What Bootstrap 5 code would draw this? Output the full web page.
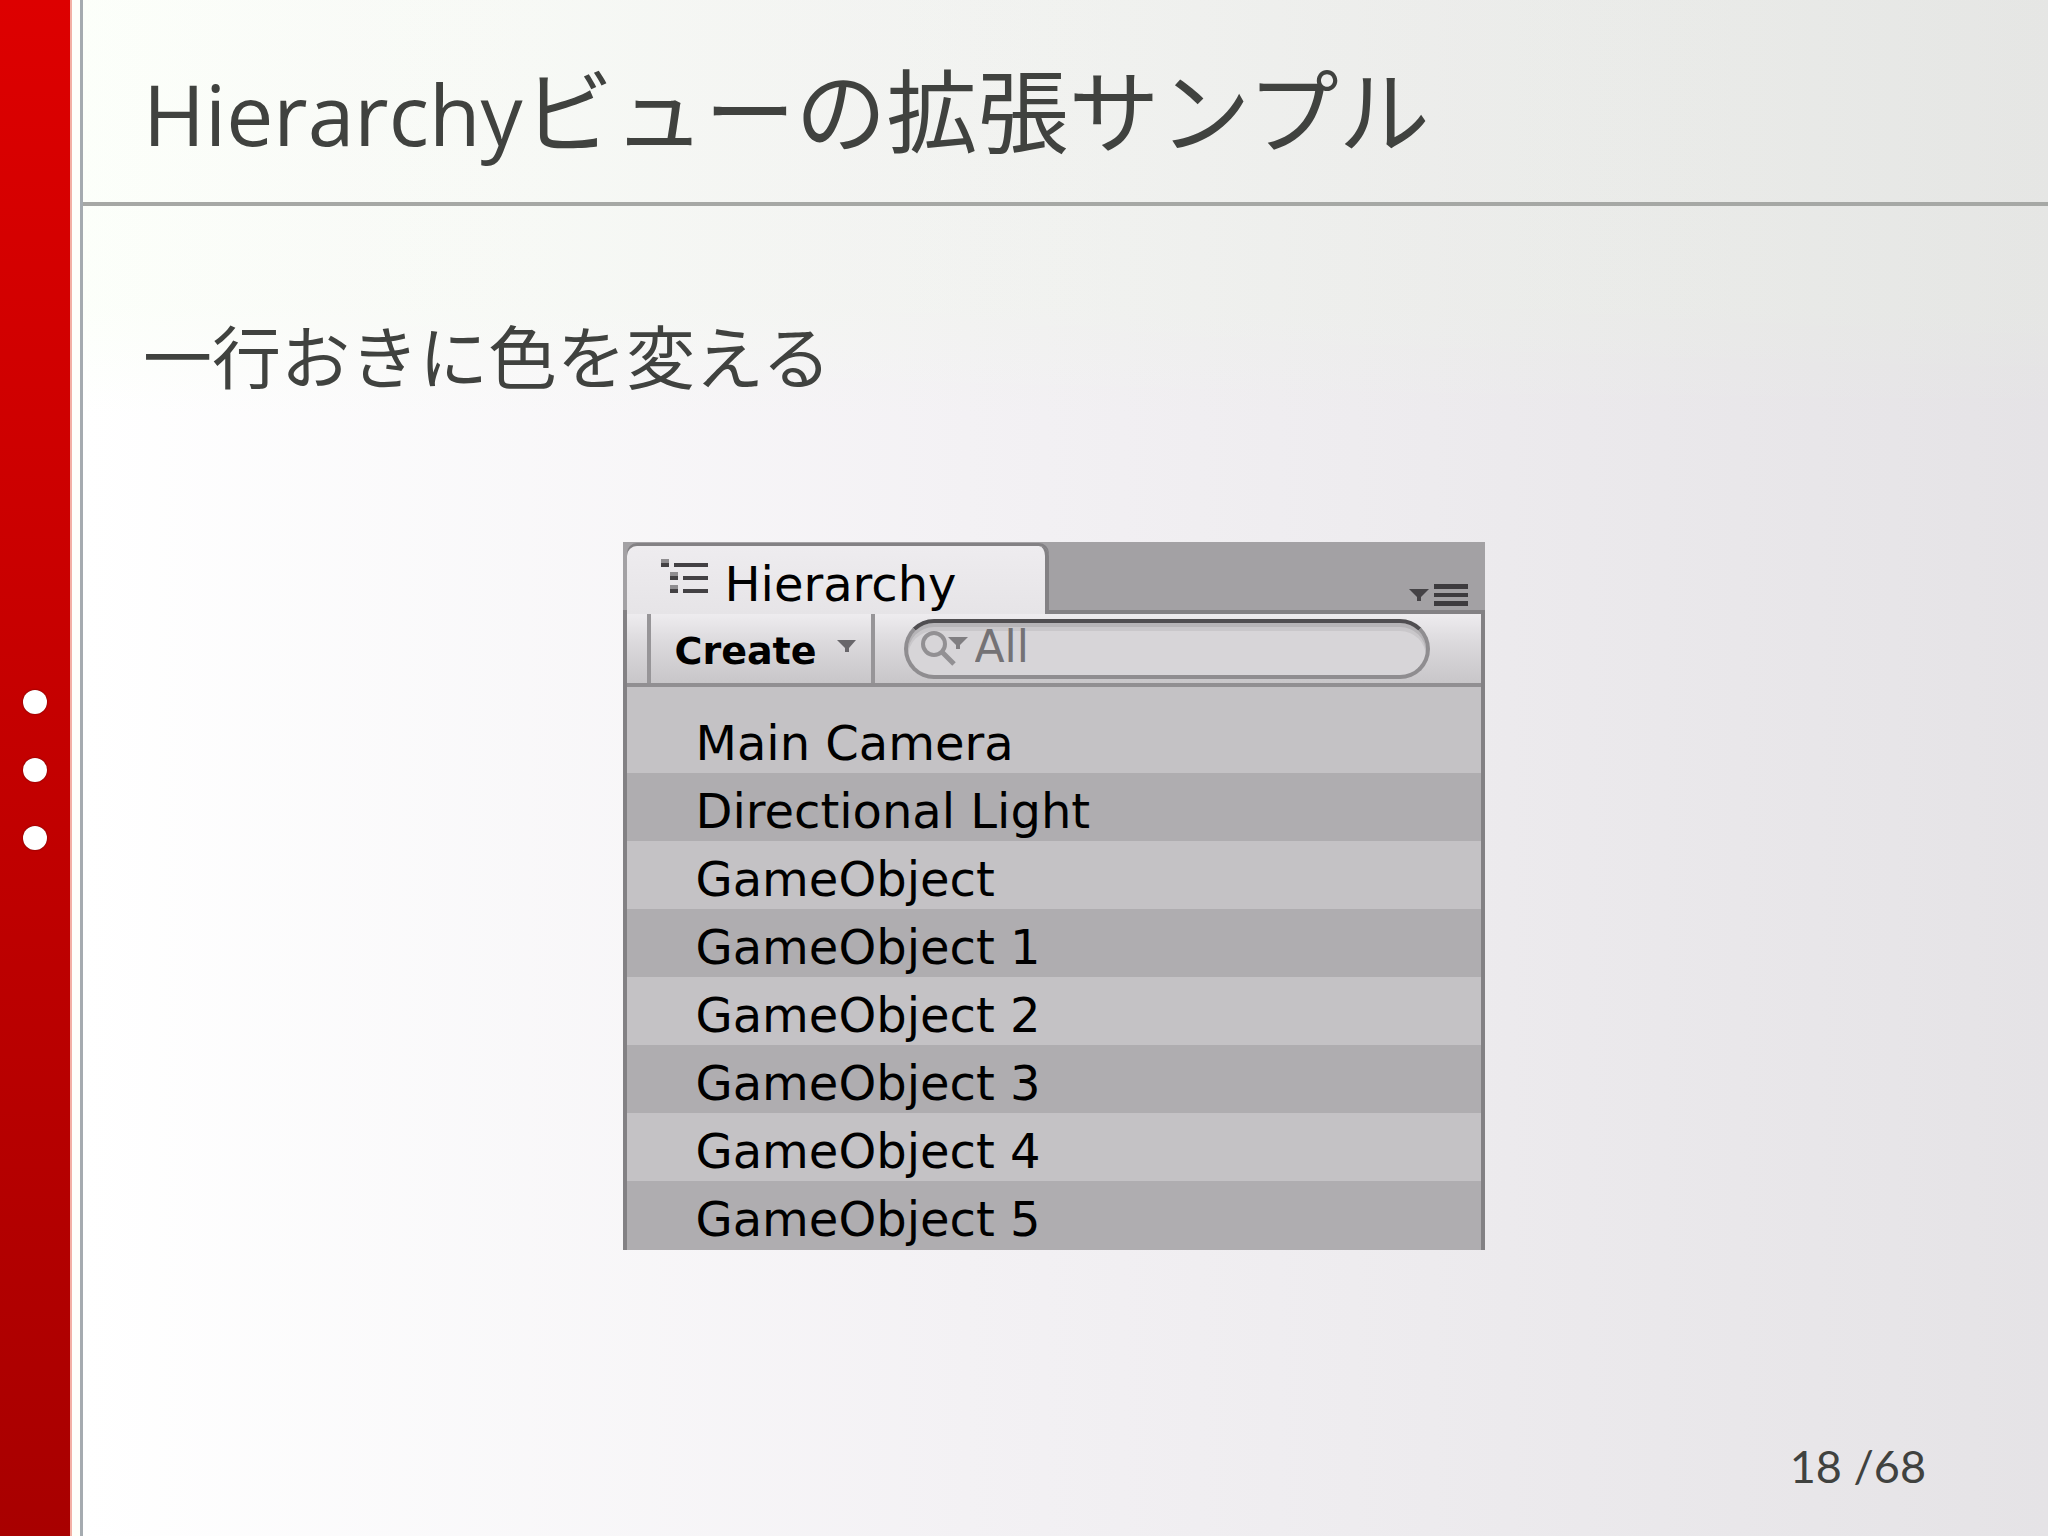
<!DOCTYPE html>
<html lang="ja">
<head>
<meta charset="utf-8">
<meta name="viewport" content="width=device-width, initial-scale=1">
<title>Hierarchyビューの拡張サンプル</title>
<link href="https://cdn.jsdelivr.net/npm/bootstrap@5.3.0/dist/css/bootstrap.min.css" rel="stylesheet">
<style>
  body { color: #40423f; font-family: "Noto Sans CJK JP", sans-serif; }
  .deck-rail { width: 70px; gap: 44px; padding-top: 4px; background: linear-gradient(#dd0000, #c30000 50%, #a80000); }
  .deck-rail span { width: 24px; height: 24px; background: #fff; box-shadow: 0 0 2px #600; }
  .deck-edge { width: 13px; background: #fefffa; border-left: 2px solid #f3b0a4; border-right: 3px solid #a5abb0; }
  .deck-slide { background: linear-gradient(rgba(232,255,215,.12) 20%, rgba(232,255,215,0) 27%), linear-gradient(to right, #fff, #f3f1f4 45%, #e5e3e6); }
  .deck-head { height: 206px; padding: 4px 84px 0 60px; border-bottom: 4px solid #a6a8a5; }
  .deck-head h1 { font-size: 91px; line-height: 204px; }
  .deck-latin { font-family: "Open Sans", sans-serif; font-size: 84px; line-height: 1; }
  .deck-body { padding: 94px 84px 0 60px; }
  .deck-body h2 { font-size: 69px; line-height: 108px; margin-bottom: 134px; }
  .deck-foot { padding: 0 122px 40px 0; font: 45px/60px Lato, sans-serif; }

  .tree-panel { width: 862px; max-width: 100%; color: #000; font-family: "DejaVu Sans", sans-serif; background: #c4c2c5; border: solid #838184; border-width: 0 4px; }
  .tree-tabs { height: 72px; background: #a3a1a4; border-bottom: 4px solid #838184; margin: 0 -4px; padding: 4px 14px 0 4px; }
  .tree-tab { width: 422px; height: 68px; margin-bottom: -4px; padding: 13px 0 0 34px; gap: 16px; font-size: 48px; line-height: 50px; border: 0; border-right: 4px solid #838184; border-radius: 10px 10px 0 0; background: linear-gradient(#eeecef, #e6e4e7); box-shadow: 0 -3px 0 #838184; }
  .tree-menu { padding: 0 3px 4px 0; }
  .tree-bar { height: 73px; background: linear-gradient(#eeecef, #dad8db 45%, #c8c6c9); border-bottom: 4px solid #918f92; }
  .tree-create { width: 228px; margin-left: 20px; padding: 4px 14px 0 24px; font-size: 38px; line-height: 66px; font-weight: 700; border: solid #979598; border-width: 0 4px; background: none; }
  .tree-create svg { margin-top: 22px; }
  .tree-search { width: 526px; height: 60px; margin: 5px 0 0 29px; padding: 0 20px 4px 12px; gap: 5px; border: 4px solid #8f8d90; border-top-color: #504e51; background: #d7d5d8; box-shadow: inset 0 4px 0 #b6b4b7, inset 0 8px 0 #c9c7ca; }
  .tree-search input { min-width: 0; color: #747275; font-size: 44px; line-height: 48px; border: 0; background: none; outline: 0; }
  .tree-rows { padding-top: 18px; padding-bottom: 1px; background: linear-gradient(#c4c2c5 50%, #afadb0 50%); }
  .tree-rows li { height: 68px; padding-left: 69px; font-size: 48px; line-height: 76px; background: #c4c2c5; }
  .tree-rows li:nth-child(even) { background: #afadb0; }
</style>
</head>
<body>
<div class="d-flex min-vh-100">
  <aside class="deck-rail d-flex flex-column align-items-center justify-content-center flex-shrink-0" aria-hidden="true">
    <span class="rounded-circle"></span><span class="rounded-circle"></span><span class="rounded-circle"></span>
  </aside>
  <div class="deck-edge flex-shrink-0"></div>
  <div class="deck-slide d-flex flex-column flex-grow-1">
    <header class="deck-head flex-shrink-0">
      <h1 class="fw-normal m-0"><span class="deck-latin">Hierarchy</span>ビューの拡張サンプル</h1>
    </header>
    <main class="deck-body flex-grow-1">
      <h2 class="fw-normal mt-0">一行おきに色を変える</h2>
      <section class="tree-panel mx-auto" aria-label="Hierarchy">
        <div class="tree-tabs d-flex align-items-end justify-content-between">
          <button type="button" class="tree-tab d-flex align-items-start">
            <svg width="48" height="36" viewBox="0 0 48 36" class="flex-shrink-0" aria-hidden="true" shape-rendering="crispEdges">
              <path fill="#8f8d90" d="M0 0h8v4H0zM9 13h8v4H9zM9 26h8v4H9z"/>
              <path fill="#434144" d="M0 4h8v4H0zM9 17h8v4H9zM9 30h8v4H9zM13 4h34v4H13zM22 17h25v4H22zM22 30h25v4H22z"/>
            </svg>
            <span>Hierarchy</span>
          </button>
          <button type="button" class="tree-menu btn border-0 rounded-0 d-flex" aria-label="Menu">
            <svg width="60" height="22" viewBox="0 0 60 22" aria-hidden="true">
              <path fill="#454346" d="M1 5h20L13 13v4H9v-4z"/>
              <path fill="#3d3b3e" d="M26 0h34v5H26zM26 9h34v4H26zM26 17h34v5H26z"/>
            </svg>
          </button>
        </div>
        <div class="tree-bar d-flex">
          <button type="button" class="tree-create d-flex align-items-start justify-content-between">
            <span>Create</span>
            <svg width="21" height="13" viewBox="0 0 21 13" aria-hidden="true">
              <path fill="#68666a" d="M1 0h19L13 8v4H9V8z"/>
            </svg>
          </button>
          <label class="tree-search d-flex align-items-center rounded-pill">
            <svg width="50" height="36" viewBox="0 0 50 36" class="flex-shrink-0 mt-1" aria-hidden="true">
              <circle cx="14" cy="13" r="11" fill="none" stroke="#929093" stroke-width="4"/>
              <path d="M22 21l12 12" stroke="#929093" stroke-width="5"/>
              <path fill="#807e81" d="M28 6h20L40 14v4H36v-4z"/>
            </svg>
            <input type="search" class="flex-grow-1 p-0" value="All" aria-label="Search">
          </label>
        </div>
        <ul class="tree-rows list-unstyled m-0">
          <li>Main Camera</li>
          <li>Directional Light</li>
          <li>GameObject</li>
          <li>GameObject 1</li>
          <li>GameObject 2</li>
          <li>GameObject 3</li>
          <li>GameObject 4</li>
          <li>GameObject 5</li>
        </ul>
      </section>
    </main>
    <footer class="deck-foot text-end">18 /68</footer>
  </div>
</div>
<script src="https://cdn.jsdelivr.net/npm/bootstrap@5.3.0/dist/js/bootstrap.bundle.min.js"></script>
</body>
</html>
